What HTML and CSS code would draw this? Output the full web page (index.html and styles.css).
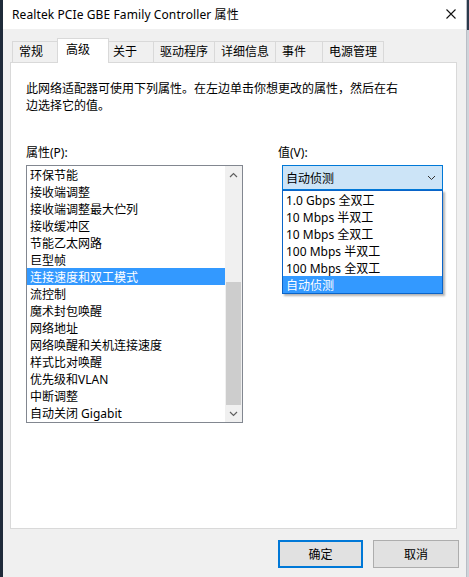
FILE: index.html
```html
<!DOCTYPE html>
<html lang="zh-CN">
<head>
<meta charset="utf-8">
<title>Realtek PCIe GBE Family Controller 属性</title>
<link rel="stylesheet" href="styles.css">
</head>
<body>
<div class="desktop">
  <div class="edge-left"></div>
  <div class="window">
    <div class="titlebar">
      <span class="title">Realtek PCIe GBE Family Controller 属性</span>
      <svg class="close" width="10" height="10" viewBox="0 0 10 10"><path d="M0.5 0.5L9.5 9.5M9.5 0.5L0.5 9.5" stroke="#111" stroke-width="1.1" fill="none"/></svg>
    </div>
    <div class="body">
      <div class="tabs">
        <div class="tab">常规</div>
        <div class="tab active">高级</div>
        <div class="tab">关于</div>
        <div class="tab">驱动程序</div>
        <div class="tab">详细信息</div>
        <div class="tab">事件</div>
        <div class="tab">电源管理</div>
      </div>
      <div class="panel">
        <p class="desc">此网络适配器可使用下列属性。在左边单击你想更改的属性，然后在右<br>边选择它的值。</p>
        <div class="fields">
          <div class="col-left">
            <div class="label">属性(P):</div>
            <div class="listbox">
              <ul class="items">
                <li>环保节能</li>
                <li>接收端调整</li>
                <li>接收端调整最大伫列</li>
                <li>接收缓冲区</li>
                <li>节能乙太网路</li>
                <li>巨型帧</li>
                <li class="sel">连接速度和双工模式</li>
                <li>流控制</li>
                <li>魔术封包唤醒</li>
                <li>网络地址</li>
                <li>网络唤醒和关机连接速度</li>
                <li>样式比对唤醒</li>
                <li>优先级和VLAN</li>
                <li>中断调整</li>
                <li>自动关闭 Gigabit</li>
              </ul>
              <div class="scrollbar">
                <div class="arrow"><svg width="9" height="6" viewBox="0 0 9 6"><path d="M1 5L4.5 1.5L8 5" stroke="#606060" stroke-width="1.2" fill="none"/></svg></div>
                <div class="track">
                  <div class="track-space"></div>
                  <div class="thumb"></div>
                </div>
                <div class="arrow"><svg width="9" height="6" viewBox="0 0 9 6"><path d="M1 1L4.5 4.5L8 1" stroke="#606060" stroke-width="1.2" fill="none"/></svg></div>
              </div>
            </div>
          </div>
          <div class="col-right">
            <div class="label">值(V):</div>
            <div class="combo-wrap">
              <div class="combo">
                <span>自动侦测</span>
                <svg class="chev" width="9" height="6" viewBox="0 0 9 6"><path d="M1 1L4.5 4.5L8 1" stroke="#333" stroke-width="1" fill="none"/></svg>
              </div>
              <ul class="dropdown">
                <li>1.0 Gbps 全双工</li>
                <li>10 Mbps 半双工</li>
                <li>10 Mbps 全双工</li>
                <li>100 Mbps 半双工</li>
                <li>100 Mbps 全双工</li>
                <li class="sel">自动侦测</li>
              </ul>
            </div>
          </div>
        </div>
      </div>
      <div class="buttons">
        <button class="btn default">确定</button>
        <button class="btn">取消</button>
      </div>
    </div>
  </div>
  <div class="edge-right"></div>
</div>
</body>
</html>
```
FILE: styles.css
```css
* { box-sizing: border-box; }
html, body {
  margin: 0;
  padding: 0;
  background: #f0f0f0;
}
body {
  font-family: "Noto Sans", "Noto Sans CJK SC", "Microsoft YaHei", sans-serif;
  font-size: 12px;
  color: #000;
  width: 469px;
  height: 577px;
  overflow: hidden;
}
.desktop {
  display: flex;
  height: 577px;
}
.edge-left {
  width: 3px;
  background: #1f2b3a;
}
.edge-right {
  width: 3px;
  background: linear-gradient(#2b3a4c 0 30px, #cfd3d9 30px);
  border-left: 1px solid #b9bec6;
}
.window {
  width: 463px;
  display: flex;
  flex-direction: column;
  background: #f0f0f0;
}
.titlebar {
  height: 29px;
  background: #fff;
  display: flex;
  align-items: center;
  justify-content: space-between;
  padding: 0 10px 1px 9px;
}
.title {
  font-size: 12px;
  line-height: 17px;
  letter-spacing: 0.1px;
}
.body {
  flex: 1;
  display: flex;
  flex-direction: column;
  padding-top: 9px;
}
.tabs {
  display: flex;
  align-items: flex-end;
  height: 24px;
  padding-left: 9px;
  position: relative;
  z-index: 1;
}
.tab {
  height: 21px;
  min-width: 48px;
  padding: 0 6px;
  border: 1px solid #d9d9d9;
  border-bottom: none;
  margin-left: -1px;
  background: #f0f0f0;
  line-height: 20px;
  white-space: nowrap;
  text-align: left;
}
.tab:first-child { margin-left: 0; }
.tab.active {
  height: 25px;
  margin: 0 -2px -1px -3px;
  background: #fff;
  padding: 0 8px;
  min-width: 52px;
  line-height: 21px;
  position: relative;
  z-index: 2;
}
.panel {
  margin-left: 7px;
  width: 447px;
  height: 467px;
  background: #fff;
  border: 1px solid #d9d9d9;
  padding: 17px 15px 0 15px;
}
.desc {
  margin: 0;
  line-height: 17px;
  white-space: nowrap;
}
.fields {
  display: grid;
  grid-template-columns: 217px 1fr;
  column-gap: 35px;
  margin-top: 30px;
}
.label {
  line-height: 17px;
  height: 17px;
  margin-bottom: 4px;
}
.listbox {
  width: 217px;
  height: 258px;
  border: 1px solid #828790;
  display: flex;
}
.items {
  list-style: none;
  margin: 0;
  padding: 0;
  flex: 1;
}
.items li {
  height: 17px;
  line-height: 15px;
  padding: 2px 0 0 3px;
  white-space: nowrap;
}
.items li.sel {
  background: #3399ff;
  color: #fff;
}
.scrollbar {
  width: 17px;
  background: #f0f0f0;
  display: flex;
  flex-direction: column;
}
.arrow {
  height: 17px;
  display: flex;
  align-items: center;
  justify-content: center;
}
.track {
  flex: 1;
  display: flex;
  flex-direction: column;
}
.track-space {
  height: 99px;
}
.thumb {
  flex: 1;
  background: #cdcdcd;
  margin: 0 1px;
}
.combo-wrap {
  position: relative;
  margin-left: 4px;
  width: 161px;
}
.combo {
  height: 25px;
  border: 1px solid #0078d7;
  background: #cce4f7;
  display: flex;
  align-items: center;
  justify-content: space-between;
  padding: 1px 6px 0 3px;
  line-height: 17px;
}
.chev { margin-top: 0; }
.dropdown {
  position: absolute;
  left: 0;
  top: 25px;
  width: 161px;
  margin: 0;
  padding: 0;
  list-style: none;
  background: #fff;
  border: 1px solid #0a64c8;
  box-shadow: 2px 2px 2px rgba(0, 0, 0, 0.3);
  z-index: 5;
}
.dropdown li {
  height: 17px;
  line-height: 15px;
  padding: 2px 0 0 3px;
  white-space: nowrap;
}
.dropdown li.sel {
  background: #3399ff;
  color: #fff;
}
.buttons {
  display: flex;
  justify-content: flex-end;
  gap: 10px;
  margin-top: 11px;
  padding-right: 7px;
}
.btn {
  width: 86px;
  height: 28px;
  background: #e1e1e1;
  border: 1px solid #adadad;
  font-family: inherit;
  font-size: 12px;
  color: #000;
  padding: 1px 0 0;
  line-height: 17px;
}
.btn.default {
  width: 85px;
  border: 2px solid #0078d7;
}
```
